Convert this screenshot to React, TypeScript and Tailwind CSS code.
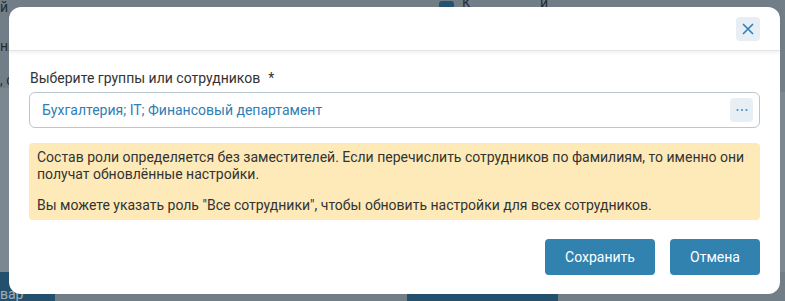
import React from 'react';

const font = { fontFamily: 'Roboto, "Noto Sans", sans-serif' };

const CloseIcon = () => (
  <svg width="12" height="12" viewBox="0 0 12 12" fill="none">
    <path d="M1.5 1.5l9 9M10.5 1.5l-9 9" stroke="#3682b8" strokeWidth="1.7" strokeLinecap="round" />
  </svg>
);

const DotsIcon = () => (
  <svg width="12" height="4" viewBox="0 0 12 4">
    <circle cx="1.5" cy="2" r="1.1" fill="#4a90c4" />
    <circle cx="6" cy="2" r="1.1" fill="#4a90c4" />
    <circle cx="10.5" cy="2" r="1.1" fill="#4a90c4" />
  </svg>
);

// dimmed page behind the dialog
const Backdrop = () => (
  <div className="absolute inset-0 bg-[#717e87] text-[14px] text-[#262c30]">
    <div className="absolute left-0 top-[88px] h-[184px] w-[9px] bg-[#7c8891]" />
    <div className="absolute right-0 top-[92px] h-[180px] w-[5px] bg-[#7c8891]" />
    <span className="absolute left-0 top-[-3px]">й</span>
    <span className="absolute left-0 top-[36px]">нь</span>
    <span className="absolute left-0 top-[70px]">, с</span>
    <div className="absolute left-[439px] top-[1px] h-[10px] w-[15px] rounded-[3px] bg-[#24526f]" />
    <span className="absolute left-[462px] top-[-7px]">К</span>
    <span className="absolute left-[540px] top-[-7px]">й</span>
    <div className="absolute left-0 top-[272px] h-[29px] w-[55px] bg-[#23506c] text-[#9fb0bc]">
      <span className="absolute left-0 top-[12px]">вар</span>
    </div>
    <div className="absolute left-[407px] top-[272px] h-[29px] w-[151px] bg-[#23506c]" />
  </div>
);

export default function App() {
  return (
    <div className="relative h-[301px] w-[785px] overflow-hidden" style={font}>
      <Backdrop />
      <div className="relative flex pl-[9px] pt-[7px]">
        <div className="flex h-[287px] w-[771px] flex-col rounded-[12px] bg-white">
          <div className="flex h-[44px] items-center justify-end border-b border-[#e3e6e9] pr-[20px] shadow-[0_2px_3px_rgba(0,0,0,0.06)]">
            <button className="flex h-[24px] w-[24px] items-center justify-center rounded-[4px] bg-[#e7eff5]">
              <CloseIcon />
            </button>
          </div>
          <div className="flex flex-1 flex-col px-[20px] pt-[17px]">
            <div className="flex h-[20px] items-center pl-[1px] text-[14px] text-[#333]">
              Выберите группы или сотрудников <span className="ml-[8px]">*</span>
            </div>
            <div className="mt-[4px] flex h-[36px] items-center justify-between rounded-[6px] border border-[#b9c7d1] pl-[12px] pr-[6px]">
              <span className="text-[14px] text-[#2f7eb5]">Бухгалтерия; IT; Финансовый департамент</span>
              <button className="flex h-[24px] w-[23px] items-center justify-center rounded-[4px] bg-[#e7eff5]">
                <DotsIcon />
              </button>
            </div>
            <div className="mt-[15px] rounded-[4px] bg-[#feeab8] px-[8px] py-[6px] text-[14px] leading-[17px] text-[#333]">
              <p>
                Состав роли определяется без заместителей. Если перечислить сотрудников по фамилиям, то именно они
                получат обновлённые настройки.
              </p>
              <p className="mt-[14px]">Вы можете указать роль "Все сотрудники", чтобы обновить настройки для всех сотрудников.</p>
            </div>
            <div className="mt-[19px] flex justify-end gap-[15px]">
              <button className="h-[36px] w-[110px] rounded-[4px] bg-[#3282b0] text-[14px] text-white">Сохранить</button>
              <button className="h-[36px] w-[90px] rounded-[4px] bg-[#3282b0] text-[14px] text-white">Отмена</button>
            </div>
          </div>
        </div>
      </div>
    </div>
  );
}
